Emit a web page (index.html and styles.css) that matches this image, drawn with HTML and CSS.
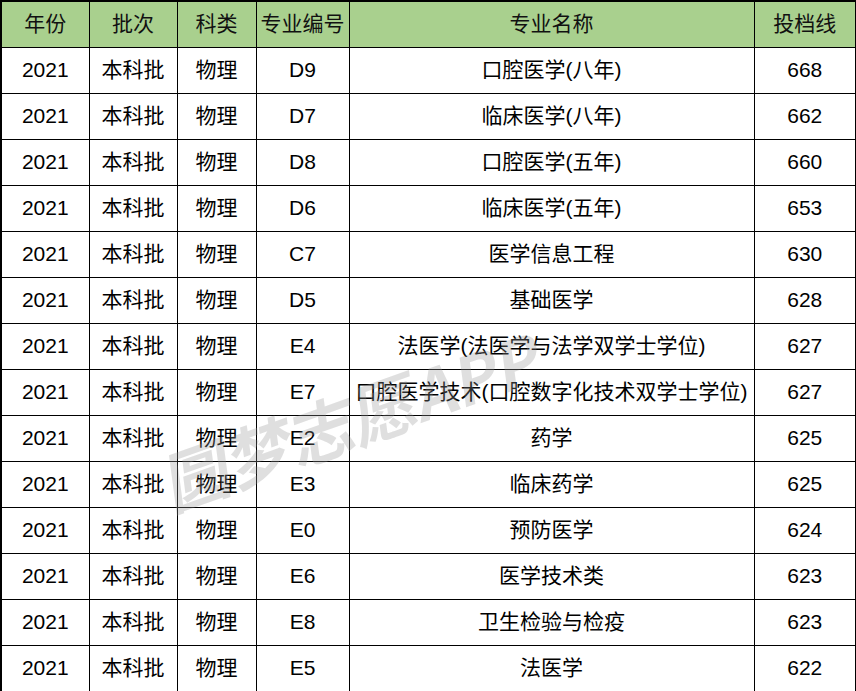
FILE: index.html
```html
<!DOCTYPE html>
<html lang="zh">
<head>
<meta charset="utf-8">
<link rel="stylesheet" href="styles.css">
</head>
<body>
<div class="wrap">
<table class="tbl">
<colgroup>
<col class="c1"><col class="c2"><col class="c3"><col class="c4"><col class="c5"><col class="c6">
</colgroup>
<thead>
<tr><th>年份</th><th>批次</th><th>科类</th><th>专业编号</th><th>专业名称</th><th>投档线</th></tr>
</thead>
<tbody>
<tr><td>2021</td><td>本科批</td><td>物理</td><td>D9</td><td>口腔医学(八年)</td><td>668</td></tr>
<tr><td>2021</td><td>本科批</td><td>物理</td><td>D7</td><td>临床医学(八年)</td><td>662</td></tr>
<tr><td>2021</td><td>本科批</td><td>物理</td><td>D8</td><td>口腔医学(五年)</td><td>660</td></tr>
<tr><td>2021</td><td>本科批</td><td>物理</td><td>D6</td><td>临床医学(五年)</td><td>653</td></tr>
<tr><td>2021</td><td>本科批</td><td>物理</td><td>C7</td><td>医学信息工程</td><td>630</td></tr>
<tr><td>2021</td><td>本科批</td><td>物理</td><td>D5</td><td>基础医学</td><td>628</td></tr>
<tr><td>2021</td><td>本科批</td><td>物理</td><td>E4</td><td>法医学(法医学与法学双学士学位)</td><td>627</td></tr>
<tr><td>2021</td><td>本科批</td><td>物理</td><td>E7</td><td>口腔医学技术(口腔数字化技术双学士学位)</td><td>627</td></tr>
<tr><td>2021</td><td>本科批</td><td>物理</td><td>E2</td><td>药学</td><td>625</td></tr>
<tr><td>2021</td><td>本科批</td><td>物理</td><td>E3</td><td>临床药学</td><td>625</td></tr>
<tr><td>2021</td><td>本科批</td><td>物理</td><td>E0</td><td>预防医学</td><td>624</td></tr>
<tr><td>2021</td><td>本科批</td><td>物理</td><td>E6</td><td>医学技术类</td><td>623</td></tr>
<tr><td>2021</td><td>本科批</td><td>物理</td><td>E8</td><td>卫生检验与检疫</td><td>623</td></tr>
<tr class="last"><td>2021</td><td>本科批</td><td>物理</td><td>E5</td><td>法医学</td><td>622</td></tr>
</tbody>
</table>
<div class="watermark">圆梦志愿APP</div>
</div>
</body>
</html>
```
FILE: styles.css
```css
html, body {
  margin: 0;
  padding: 0;
  background: #fff;
}
.wrap {
  position: relative;
  width: 856px;
  height: 691px;
  overflow: hidden;
}
.tbl {
  border-collapse: collapse;
  table-layout: fixed;
  width: 856px;
  font-family: "Liberation Sans", "Noto Sans CJK SC", sans-serif;
  font-size: 21px;
  color: #000;
}
.c1 { width: 88px; }
.c2 { width: 88px; }
.c3 { width: 79px; }
.c4 { width: 93px; }
.c5 { width: 405px; }
.c6 { width: 102px; }
.tbl th, .tbl td {
  border: 1px solid #000;
  height: 43px;
  padding: 0 0 2px 0;
  text-align: center;
  vertical-align: middle;
  white-space: nowrap;
  font-weight: normal;
  line-height: 24px;
}
.tbl th {
  background: #a9d08e;
  color: #111;
}
.tbl th:first-child, .tbl td:first-child {
  border-left: 2px solid #000;
}
.tbl th:last-child, .tbl td:last-child {
  border-right: 2px solid #000;
}
.tbl thead th {
  border-top: 2px solid #000;
}
.tbl .last td {
  border-bottom: 2px solid #000;
}
.watermark {
  position: absolute;
  left: 168px;
  top: 444px;
  height: 76px;
  line-height: 76px;
  font-family: "Noto Sans CJK SC", "Liberation Sans", sans-serif;
  font-size: 66px;
  font-weight: 600;
  color: rgba(150, 150, 150, 0.3);
  transform: rotate(-19.5deg) skewX(-12deg);
  transform-origin: left center;
  pointer-events: none;
  white-space: nowrap;
  letter-spacing: 0px;
}
```
